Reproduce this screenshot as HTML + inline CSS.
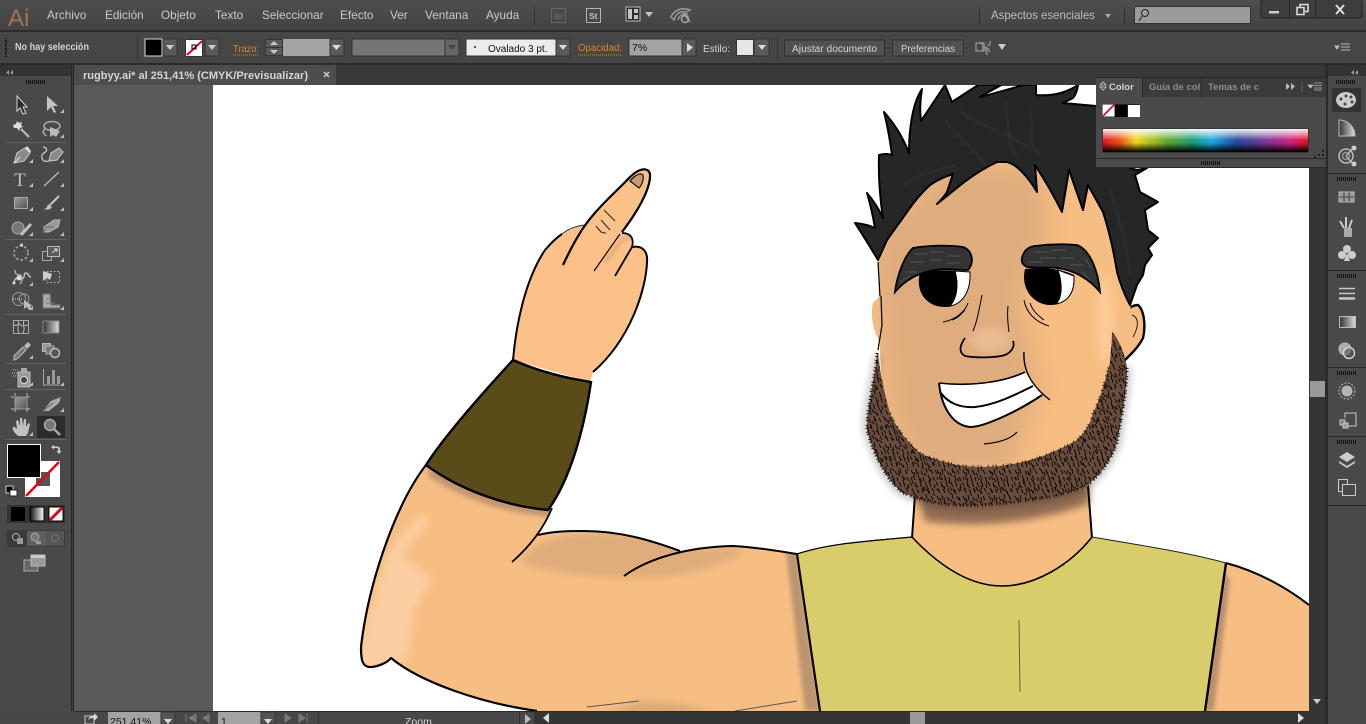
<!DOCTYPE html>
<html><head><meta charset="utf-8"><title>rugbyy.ai</title>
<style>
html,body{margin:0;padding:0;background:#444;overflow:hidden}
svg{display:block;position:absolute;left:0;top:0}
text{font-family:"Liberation Sans",sans-serif}
</style></head><body>
<svg width="1366" height="724" viewBox="0 0 1366 724" xmlns="http://www.w3.org/2000/svg">
<defs>
<filter id="b1" x="-30%" y="-30%" width="160%" height="160%"><feGaussianBlur stdDeviation="1"/></filter>
<filter id="b2" x="-30%" y="-30%" width="160%" height="160%"><feGaussianBlur stdDeviation="2"/></filter>
<filter id="b4" x="-40%" y="-40%" width="180%" height="180%"><feGaussianBlur stdDeviation="4"/></filter>
<filter id="b12" x="-50%" y="-50%" width="200%" height="200%"><feGaussianBlur stdDeviation="13"/></filter>
<linearGradient id="top" x1="0" y1="0" x2="0" y2="1"><stop offset="0" stop-color="#4e4e4e"/><stop offset="1" stop-color="#434343"/></linearGradient>
<linearGradient id="grayg" x1="0" y1="0" x2="1" y2="1"><stop offset="0" stop-color="#9a9a9a"/><stop offset="1" stop-color="#555"/></linearGradient>
<linearGradient id="grad2" x1="0" y1="0" x2="1" y2="0"><stop offset="0" stop-color="#333"/><stop offset="1" stop-color="#ddd"/></linearGradient>
<linearGradient id="grad3" x1="0" y1="0" x2="1" y2="0"><stop offset="0" stop-color="#111"/><stop offset="1" stop-color="#fff"/></linearGradient>
<linearGradient id="spec" x1="0" y1="0" x2="1" y2="0">
<stop offset="0" stop-color="#e5101a"/><stop offset=".08" stop-color="#e8501a"/><stop offset=".16" stop-color="#ecd81a"/><stop offset=".32" stop-color="#5aa52e"/><stop offset=".44" stop-color="#1a9a78"/><stop offset=".53" stop-color="#18a8de"/><stop offset=".65" stop-color="#27479c"/><stop offset=".78" stop-color="#6e3a95"/><stop offset=".92" stop-color="#d01f80"/><stop offset="1" stop-color="#e5101a"/></linearGradient>
<linearGradient id="specv" x1="0" y1="0" x2="0" y2="1"><stop offset="0" stop-color="#fff" stop-opacity=".95"/><stop offset=".5" stop-color="#fff" stop-opacity="0"/><stop offset=".6" stop-color="#000" stop-opacity="0"/><stop offset="1" stop-color="#000" stop-opacity="1"/></linearGradient>
<pattern id="hairs" width="26" height="26" patternUnits="userSpaceOnUse">
<path d="M1 2l2 4M6 1l1 5M11 3l2 4M16 0l1 5M21 2l2 4M3 8l2 4M8 7l2 5M13 9l1 4M18 7l2 5M23 9l2 4M0 14l2 4M5 14l1 5M10 15l2 4M15 14l2 5M20 15l1 4M2 20l2 5M7 21l2 4M12 20l1 5M17 21l2 4M22 20l2 4M4 4l1 4M9 11l2 4M14 5l2 3M19 12l1 4M24 16l1 4M6 17l2 3M14 19l2 4M19 23l1 3M1 9l1 3" stroke="#0d0b0a" stroke-width="1" fill="none"/>
</pattern>
<pattern id="hairs2" width="37" height="31" patternUnits="userSpaceOnUse">
<path d="M3 3l3 3M10 5l2 4M19 2l1 4M28 6l3 3M34 1l1 4M6 13l-1 4M15 12l3 3M24 15l1 4M32 13l2 4M2 22l2 3M11 24l3 2M20 21l-1 4M29 24l2 4M35 22l1 4M8 28l2 3M25 28l3 2" stroke="#120e0c" stroke-width="1" fill="none"/>
</pattern>
<clipPath id="cv"><rect x="213" y="85" width="1096" height="626"/></clipPath>
<clipPath id="facec"><path d="M878 262L887 240 907 212 930 185 960 165 1000 158 1040 165 1105 190 1135 280 1130 310 1120 365 1112 440 1040 490 950 490 885 440 880 350Z"/></clipPath>
<clipPath id="armc"><path d="M426 465C395 505 368 585 361 647C361 660 362 668 372 667C380 666 388 662 391 658C420 682 480 703 537 711L820 711 797 554C778 551 755 547 733 546L700 547 680 551C650 540 620 531 583 531C570 531 555 531 538 535L552 508Z"/></clipPath>
<clipPath id="rarmc"><path d="M1226 563C1260 572 1290 590 1309 605L1309 711 1205 711Z"/></clipPath>
</defs>

<!-- base -->
<rect width="1366" height="724" fill="#484848"/>
<rect x="74" y="85" width="139" height="626" fill="#5a5a5a"/>
<rect x="213" y="85" width="1096" height="626" fill="#fff"/>

<!-- ARTWORK -->
<g clip-path="url(#cv)">
<!-- neck -->
<path d="M915 480L912 540C945 572 975 586 1002 586C1035 586 1070 565 1092 540L1088 470Z" fill="#f7be83"/>
<path d="M915 490L1088 480 1090 503C1050 518 990 530 925 521Z" fill="#8a6650" filter="url(#b4)" opacity=".95"/>
<path d="M915 495L912 538M1088 486L1092 538" stroke="#000" stroke-width="2" fill="none"/>
<!-- shirt -->
<path d="M797 554C830 543 870 541 912 537C945 572 975 586 1002 586C1035 586 1070 565 1092 537C1140 545 1190 553 1226 563L1205 711 820 711Z" fill="#d9cc6b"/>
<path d="M912 537C945 572 975 586 1002 586C1035 586 1070 565 1092 537" stroke="#000" stroke-width="1.600" fill="none"/>
<path d="M797 554C830 543 870 541 912 537M1092 537C1140 545 1190 553 1226 563" stroke="#222" stroke-width="1" fill="none"/>
<path d="M1019 620L1020 692" stroke="#6b6130" stroke-width="1"/>
<!-- right arm -->
<path d="M1226 563C1260 572 1290 590 1309 605L1309 711 1205 711Z" fill="#f7be83"/>
<g clip-path="url(#rarmc)"><path d="M1222 570L1203 711 1214 711 1230 580Z" fill="#b98f6c" filter="url(#b2)"/></g>
<path d="M1226 563L1205 711" stroke="#000" stroke-width="2.400" fill="none"/>
<path d="M1226 563C1260 572 1290 590 1309 605" stroke="#000" stroke-width="2" fill="none"/>
<!-- arm -->
<path d="M426 465C395 505 368 585 361 647C361 660 362 668 372 667C380 666 388 662 391 658C420 682 480 703 537 711L820 711 797 554C778 551 755 547 733 546L700 547 680 551C650 540 620 531 583 531C570 531 555 531 538 535L552 508Z" fill="#f7be83"/>
<g clip-path="url(#armc)">
<path d="M355 670L370 610 388 552 420 515 430 520 402 556 432 578 415 610 407 660 390 672Z" fill="#fbcda0" filter="url(#b4)"/>
<path d="M520 562C540 535 570 533 600 533C650 535 680 548 700 548L745 548C735 565 680 578 640 578C590 578 545 572 520 562Z" fill="#dfac7c" filter="url(#b4)"/>
<path d="M426 468L430 478C465 500 510 515 552 517L552 505Z" fill="#bf9470" filter="url(#b2)" opacity=".95"/>
<path d="M786 552L797 552 820 711 805 711Z" fill="#bb9470" filter="url(#b2)"/>
<path d="M640 702C660 700 700 706 715 715L600 715Z" fill="#d8a878" filter="url(#b4)"/>
</g>
<path d="M426 465C395 505 368 585 361 647C361 660 362 668 372 667C380 666 388 662 391 658C420 682 480 703 537 711" stroke="#000" stroke-width="2.200" fill="none" stroke-linejoin="round"/>
<path d="M552 508C543 530 528 548 512 562" stroke="#000" stroke-width="1.800" fill="none"/>
<path d="M538 535C555 531 570 531 583 531C620 531 650 540 680 551" stroke="#000" stroke-width="2" fill="none"/>
<path d="M624 576C650 557 690 547 733 546C755 547 778 551 797 554" stroke="#000" stroke-width="2" fill="none"/>
<path d="M797 554L820 711" stroke="#000" stroke-width="2.200" fill="none"/>
<path d="M797 554C830 543 870 541 912 537" stroke="#000" stroke-width="1.200" fill="none"/>
<path d="M587 707L639 701M735 711L797 701" stroke="#555" stroke-width="1" fill="none"/>
<!-- hand -->
<path d="M513 360C516 325 525 280 545 250C555 238 568 228 585 225L630 177C638 169 648 166 650 174C651 190 635 215 622 232C632 233 634 240 632 247C643 245 648 252 647 262C646 290 630 340 593 372L590 382Z" fill="#fbc188"/>
<path d="M513 360C516 325 525 280 545 250C551 243 556 238 562 234" stroke="#000" stroke-width="2" fill="none"/>
<path d="M562 234C568 229 576 226 585 225" stroke="#333" stroke-width="1" fill="none"/>
<path d="M563 265C570 250 578 235 586 224C600 205 618 190 630 177C638 169 648 166 650 174C651 190 635 215 622 232" stroke="#000" stroke-width="2.200" fill="none"/>
<path d="M594 271L620 234" stroke="#000" stroke-width="1.200" fill="none"/>
<path d="M605 262L622 240 630 237" stroke="#d8a777" stroke-width="5" fill="none" opacity=".6" filter="url(#b1)"/>
<path d="M622 233C632 233 634 240 632 247L615 276" stroke="#000" stroke-width="1.800" fill="none"/>
<path d="M632 247C643 245 648 252 647 262C646 290 630 340 593 372" stroke="#000" stroke-width="2" fill="none"/>
<path d="M630 181C634 176 640 172 643 175C644 179 642 185 639 188Z" fill="#c89b72" stroke="#111" stroke-width="1.200"/>
<path d="M604 210L615 221M601 220L610 230M596 226L601 232C603 233 605 233 606 233" stroke="#222" stroke-width="1" fill="none"/>
<!-- band -->
<path d="M513 360C540 372 565 378 591 382C584 430 570 480 548 510C505 506 460 490 426 465C445 435 490 385 513 360Z" fill="#5a4c19" stroke="#000" stroke-width="2.400"/>

<!-- ears -->
<path d="M1115 318L1130 307 1140 305C1145 312 1145 328 1140 342L1123 362 1112 350Z" fill="#f7be83"/>
<path d="M1118 317C1125 310 1132 305 1138 305C1144 310 1146 325 1143 338C1138 348 1130 355 1123 362" stroke="#000" stroke-width="2.400" fill="none"/>
<path d="M1133 337C1138 328 1140 318 1132 315" stroke="#222" stroke-width="1" fill="none"/>
<path d="M880 296L873 303C870 315 873 330 880 343Z" fill="#f3bb84"/>
<!-- face -->
<path d="M878 262L887 240 907 212 930 185 960 165 1000 158 1040 165 1105 190 1135 280 1130 310 1120 365 1112 440 1040 490 950 490 885 440 880 350Z" fill="#f7be83"/>
<g clip-path="url(#facec)">
<path d="M870 230L950 160 1040 170 1050 230 1020 300 1040 385 1010 475 920 475 890 420Z" fill="#dfac7e" filter="url(#b12)"/>
<ellipse cx="1105" cy="320" rx="9" ry="45" fill="#fbca96" filter="url(#b4)"/>
<ellipse cx="990" cy="340" rx="20" ry="12" fill="#eabb8f" filter="url(#b4)"/>
</g>
<path d="M881 296L882 325 878 350" stroke="#000" stroke-width="1.200" fill="none"/>
<path d="M878 262L880 296" stroke="#000" stroke-width="1.200" fill="none"/>

<!-- beard -->
<path d="M877 356C875 380 866 410 867 430C872 450 885 480 903 493C925 502 940 504 953 505C980 507 1010 503 1030 500C1055 497 1075 492 1090 483C1105 470 1113 455 1117 443C1123 410 1127 390 1127 367" stroke="#000" stroke-width="6" fill="none" opacity=".3" filter="url(#b4)"/>
<path d="M877 353C875 380 866 410 867 430C872 450 885 480 903 493C925 502 940 504 953 505C980 507 1010 503 1030 500C1055 497 1075 492 1090 483C1105 470 1113 455 1117 443C1123 410 1127 390 1127 367C1124 350 1116 335 1112 332C1112 345 1110 355 1110 363C1105 380 1100 400 1093 413C1090 425 1085 432 1077 440C1060 450 1040 458 1023 462C1005 466 995 467 983 467C972 467 965 466 957 465C945 462 930 458 920 453C905 440 895 425 890 413C885 395 880 375 878 353Z" fill="#6a4c3d"/>
<path d="M877 353C875 380 866 410 867 430C872 450 885 480 903 493C925 502 940 504 953 505C980 507 1010 503 1030 500C1055 497 1075 492 1090 483C1105 470 1113 455 1117 443C1123 410 1127 390 1127 367C1124 350 1116 335 1112 332C1112 345 1110 355 1110 363C1105 380 1100 400 1093 413C1090 425 1085 432 1077 440C1060 450 1040 458 1023 462C1005 466 995 467 983 467C972 467 965 466 957 465C945 462 930 458 920 453C905 440 895 425 890 413C885 395 880 375 878 353Z" fill="url(#hairs)"/>
<path d="M877 353C875 380 866 410 867 430C872 450 885 480 903 493C925 502 940 504 953 505C980 507 1010 503 1030 500C1055 497 1075 492 1090 483C1105 470 1113 455 1117 443C1123 410 1127 390 1127 367C1124 350 1116 335 1112 332C1112 345 1110 355 1110 363C1105 380 1100 400 1093 413C1090 425 1085 432 1077 440C1060 450 1040 458 1023 462C1005 466 995 467 983 467C972 467 965 466 957 465C945 462 930 458 920 453C905 440 895 425 890 413C885 395 880 375 878 353Z" fill="url(#hairs2)"/>
<path d="M877 353C875 380 866 410 867 430C872 450 885 480 903 493C925 502 940 504 953 505C980 507 1010 503 1030 500C1055 497 1075 492 1090 483C1105 470 1113 455 1117 443C1123 410 1127 390 1127 367" stroke="#1a1412" stroke-width="3" stroke-dasharray="1 2 1 3 1 1.500 1 4" fill="none"/>
<path d="M890 413C895 425 905 440 920 453C930 458 945 462 957 465C980 468 1005 466 1023 462C1040 458 1060 450 1077 440C1085 432 1090 425 1093 413C1100 400 1105 380 1110 363" stroke="#2a1f18" stroke-width="2.500" stroke-dasharray="1 4 1 2 1 6" fill="none"/>

<!-- hair -->
<path d="M878 260Q866 240 855 223Q866 224 875 228Q872 210 867 193Q877 205 883 218Q878 185 879 155Q886 153 892 155Q889 132 884 112Q900 130 909 153Q909 130 913 112Q916 98 922 89Q919 105 921 121L945 85 952 102 978 85 1000 85 980 97 1023 85 1036 85 1036 95Q1060 97 1078 85Q1077 93 1073 98L1063 103 1096 106 1130 168 1137 170 1147 168 1135 175 1140 192 1158 202 1145 210 1148 230 1158 238 1148 248 1152 255 1145 265 1143 275 1137 285 1130 305Q1122 290 1117 272Q1112 240 1103 212L1088 185 1083 210 1069 170 1062 212Q1050 188 1035 165L1037 192Q1030 180 1023 173Q1015 164 1007 162L997 162Q980 170 963 183L937 204Q943 198 947 192L953 174Q940 178 930 185Q918 196 907 212L887 240Z" fill="#262626" stroke="#000" stroke-width="2" stroke-linejoin="round"/>
<path d="M980 97L1002 85 1023 85Z" fill="#fff" stroke="#000" stroke-width="1.500"/>
<g stroke="#343434" stroke-width="2" fill="none" filter="url(#b1)" opacity=".8">
<path d="M905 185C920 170 945 170 955 165M945 120C960 140 975 150 985 165M1005 100C1010 125 1005 145 1020 160M1030 110C1035 130 1025 145 1040 155"/>
<path d="M1110 190C1120 220 1128 250 1130 275M960 110C980 130 1000 125 1030 150"/>
</g>
<!-- eyes -->
<path d="M920 272C915 290 925 307 945 307C960 307 970 295 970 272C955 270 935 270 920 272Z" fill="#000"/>
<path d="M955 271C959 285 957 298 950 306C962 304 971 292 970 272Z" fill="#fff" stroke="#000" stroke-width="1"/>
<path d="M1025 269C1020 290 1035 306 1052 305C1068 304 1075 290 1074 275C1060 268 1040 267 1025 269Z" fill="#000"/>
<path d="M1058 270C1063 285 1062 298 1056 304C1068 302 1075 292 1074 276Z" fill="#fff" stroke="#000" stroke-width="1"/>
<!-- eyebrows -->
<path d="M895 292C897 275 905 255 913 248C930 245 950 245 963 247C972 250 975 262 968 270C955 270 945 268 935 270C920 272 905 280 895 292Z" fill="#333" stroke="#000" stroke-width="1.800"/>
<path d="M1022 258C1024 250 1028 247 1035 246C1050 244 1065 244 1077 245C1090 250 1098 270 1100 292C1090 280 1075 270 1057 268C1045 267 1035 268 1027 267C1023 265 1021 262 1022 258Z" fill="#333" stroke="#000" stroke-width="1.800"/>
<path d="M915 254h12M930 252h14M948 256h12M910 262h14M930 260h12M946 263h14M905 272h12M900 282l10 -6M1035 252h14M1052 250h14M1040 258h16M1060 258h14M1030 262h12M1070 265h14M1082 272l8 8M1085 258l6 10" stroke="#555" stroke-width="1" fill="none"/>
<!-- wrinkles -->
<path d="M982 295C979 310 977 322 973 331M1008 306C1007 315 1008 325 1009 332M968 303C965 312 955 320 943 322M965 310C960 315 958 318 952 320M1024 300C1026 312 1035 322 1049 326M1030 303C1033 312 1040 317 1044 320" stroke="#000" stroke-width="1" fill="none"/>
<!-- nose -->
<path d="M965 338C960 345 958 352 965 356C975 358 995 358 1005 355C1012 352 1015 346 1013 341" stroke="#000" stroke-width="1.800" fill="none"/>
<!-- mouth -->
<path d="M939 383C965 386 1000 384 1025 372L1042 395C1020 408 990 428 968 427C950 425 940 405 939 383Z" fill="#fff"/>
<path d="M939 383C965 386 1000 384 1025 372" stroke="#000" stroke-width="1.600" fill="none"/>
<path d="M939 383C941 403 950 425 970 427C985 427 1020 410 1042 395" stroke="#000" stroke-width="2" fill="none"/>
<path d="M941 393C948 403 960 408 975 407C995 405 1015 395 1033 386" stroke="#000" stroke-width="2" fill="none"/>
<path d="M1024 352C1023 368 1030 385 1050 400" stroke="#000" stroke-width="1.400" fill="none"/>
<path d="M984 444C995 443 1010 440 1017 432" stroke="#000" stroke-width="1.200" fill="none"/>
</g>

<!-- TOP BARS -->
<rect width="1366" height="31" fill="url(#top)"/>
<rect y="30" width="1366" height="2" fill="#2c2c2c"/>
<rect y="32" width="1366" height="32" fill="#464646"/>
<rect y="63" width="1366" height="2" fill="#2b2b2b"/>
<rect y="65" width="1366" height="20" fill="#393939"/>
<text x="8" y="26" font-size="24" fill="#a47353">Ai</text>
<g font-size="11.800" fill="#c9c9c9">
<text x="47" y="19">Archivo</text><text x="105" y="19">Edición</text><text x="161" y="19">Objeto</text><text x="215" y="19">Texto</text><text x="262" y="19">Seleccionar</text><text x="340" y="19">Efecto</text><text x="390" y="19">Ver</text><text x="425" y="19">Ventana</text><text x="486" y="19">Ayuda</text>
<text x="991" y="19" fill="#bdbdbd" textLength="104" lengthAdjust="spacingAndGlyphs">Aspectos esenciales</text>
</g>
<rect x="534" y="7" width="1" height="18" fill="#2f2f2f"/>
<rect x="551.500" y="8.500" width="14" height="14" fill="none" stroke="#666"/>
<text x="554" y="19" font-size="8.500" fill="#666" font-weight="bold">Br</text>
<rect x="586.500" y="8.500" width="14" height="14" fill="none" stroke="#b5b5b5"/>
<text x="589" y="19" font-size="8.500" fill="#c5c5c5" font-weight="bold">St</text>
<rect x="626" y="7" width="14" height="14" fill="#2c2c2c" stroke="#b8b8b8"/>
<path d="M628 9h4v10h-4zM634 9h4v4h-4zM634 15h4v4h-4z" fill="#c4c4c4"/>
<path d="M645 12h8l-4 5z" fill="#c4c4c4"/>
<path d="M671 17C674 10 682 7 690 10L686 12C680 11 676 14 674 20ZM678 20C679 15 684 13 688 14M683 13L690 22" stroke="#999" stroke-width="1.500" fill="none"/>
<circle cx="685" cy="19" r="3.500" fill="none" stroke="#aaa" stroke-width="1.500"/>
<rect x="979" y="7" width="1" height="18" fill="#2f2f2f"/>
<rect x="1124" y="7" width="1" height="18" fill="#2f2f2f"/>
<path d="M1105 14h6l-3 4z" fill="#aaa"/>
<rect x="1134.500" y="6.500" width="116" height="17" fill="#9b9b9b" stroke="#333"/>
<circle cx="1145" cy="13" r="3.500" fill="none" stroke="#222"/><path d="M1142 16l-3 5" stroke="#222"/>
<!-- window buttons -->
<path d="M1261 0v15q0 3 3 3h95q3 0 3-3V0" fill="#3e3e3e" stroke="#222"/>
<path d="M1289.500 0v18M1315.500 0v18" stroke="#262626"/>
<rect x="1269" y="11" width="10" height="2.500" fill="#ccc"/>
<path d="M1297 7.500h7v7h-7zM1300 7V4.500h8v7h-3" fill="none" stroke="#ddd" stroke-width="1.600"/>
<path d="M1336 5l8 9M1344 5l-8 9" stroke="#ddd" stroke-width="2"/>

<!-- control bar -->
<path d="M6 38v20" stroke="#111" stroke-width="2" stroke-dasharray="1 1"/>
<text x="15" y="50" font-size="9.800" fill="#d5d5d5" font-weight="bold" textLength="74" lengthAdjust="spacingAndGlyphs">No hay selección</text>
<rect x="137" y="36" width="1" height="24" fill="#333"/>
<rect x="145" y="39" width="17" height="17" fill="#000" stroke="#ddd"/>
<rect x="163" y="39" width="14" height="17" fill="#5a5a5a" stroke="#333"/><path d="M166 45h8l-4 5z" fill="#ccc"/>
<rect x="185.500" y="39.500" width="17" height="17" fill="#fff" stroke="#333"/>
<path d="M187 55l15-14" stroke="#e8001c" stroke-width="2"/><rect x="192" y="45" width="4" height="4" fill="none" stroke="#000"/>
<rect x="205" y="39" width="14" height="17" fill="#5a5a5a" stroke="#333"/><path d="M208 45h8l-4 5z" fill="#ccc"/>
<text x="233" y="52" font-size="10" fill="#d8852b" textLength="26" lengthAdjust="spacingAndGlyphs">Trazo:</text>
<path d="M233 55h26" stroke="#d8852b" stroke-dasharray="1 1"/>
<rect x="265.500" y="39.500" width="17" height="16" fill="#5a5a5a" stroke="#333"/>
<path d="M270 45l4-4 4 4zM270 50l4 4 4-4z" fill="#ccc"/><path d="M266 47.500h16" stroke="#333"/>
<rect x="283" y="39" width="47" height="17" fill="#a3a3a3"/>
<rect x="330" y="39" width="14" height="17" fill="#5a5a5a" stroke="#333"/><path d="M332 45h9l-4.500 5z" fill="#ddd"/>
<rect x="352" y="39" width="93" height="17" fill="#757575" stroke="#333"/>
<rect x="445" y="39" width="14" height="17" fill="#666" stroke="#333"/><path d="M448 45h8l-4 5z" fill="#444"/>
<rect x="466" y="39" width="90" height="17" fill="#ececec" stroke="#333"/>
<circle cx="475" cy="47" r="1" fill="#222"/>
<text x="488" y="52" font-size="10" fill="#111">Ovalado 3 pt.</text>
<rect x="556" y="39" width="14" height="17" fill="#5a5a5a" stroke="#333"/><path d="M559 45h8l-4 5z" fill="#ddd"/>
<text x="578" y="51" font-size="10" fill="#d8852b" textLength="44" lengthAdjust="spacingAndGlyphs">Opacidad:</text>
<path d="M578 55h44" stroke="#d8852b" stroke-dasharray="1 1"/>
<rect x="629" y="39" width="53" height="17" fill="#a3a3a3" stroke="#333"/>
<text x="632" y="51" font-size="10.500" fill="#111">7%</text>
<rect x="682" y="39" width="14" height="17" fill="#5a5a5a" stroke="#333"/><path d="M687 43l6 4.500-6 4.500z" fill="#ddd"/>
<text x="703" y="52" font-size="10" fill="#d5d5d5" textLength="27" lengthAdjust="spacingAndGlyphs">Estilo:</text>
<rect x="736.500" y="39.500" width="17" height="16" fill="#e6e6e6" stroke="#333"/>
<rect x="754" y="39" width="15" height="17" fill="#5a5a5a" stroke="#333"/><path d="M758 45h8l-4 5z" fill="#ddd"/>
<rect x="777" y="36" width="1" height="24" fill="#333"/>
<rect x="784.500" y="40" width="100" height="16" fill="#505050" stroke="#2e2e2e"/>
<text x="792" y="52" font-size="10" fill="#d5d5d5" textLength="85" lengthAdjust="spacingAndGlyphs">Ajustar documento</text>
<rect x="892.500" y="40" width="71" height="16" fill="#505050" stroke="#2e2e2e"/>
<text x="901" y="52" font-size="10" fill="#d5d5d5" textLength="54" lengthAdjust="spacingAndGlyphs">Preferencias</text>
<path d="M976 43h8v8h-8zM980 42l10 10M990 41v4h-3" fill="none" stroke="#aaa"/>
<path d="M982 44l8 5-3 1 1 5-2 0-1-5-3 2z" fill="#888"/>
<path d="M998 44h8l-4 6z" fill="#ccc"/>
<path d="M1335 46h4l-2 3zM1341 44h9M1341 47h9M1341 50h9" stroke="#bbb" fill="#bbb"/>

<!-- tab row -->
<rect x="0" y="65" width="72" height="11" fill="#333"/>
<path d="M9 70l-3 2.500 3 2.500zM13 70l-3 2.500 3 2.500z" fill="#999"/>
<rect x="74" y="65" width="262" height="20" fill="#4d4d4d"/>
<rect x="72" y="65" width="2" height="20" fill="#262626"/>
<text x="83" y="79" font-size="11" fill="#d5d5d5" font-weight="bold" textLength="225" lengthAdjust="spacingAndGlyphs">rugbyy.ai* al 251,41% (CMYK/Previsualizar)</text>
<path d="M324 72l5 5M329 72l-5 5" stroke="#ccc" stroke-width="1.500"/>

<!-- left toolbar -->
<rect x="0" y="76" width="72" height="635" fill="#494949"/>
<rect x="71" y="65" width="3" height="659" fill="#262626"/>
<rect x="72" y="65" width="1" height="659" fill="#3d3d3d"/>
<path d="M26 82h19" stroke="#111" stroke-width="4" stroke-dasharray="1 1"/>
<g fill="#646464">
<rect x="6" y="142" width="60" height="1"/><rect x="6" y="239" width="60" height="1"/><rect x="6" y="314" width="60" height="1"/><rect x="6" y="363" width="60" height="1"/><rect x="6" y="389" width="60" height="1"/><rect x="6" y="439" width="60" height="1"/>
</g>
<rect x="37" y="416" width="28" height="22" fill="#2c2c2c"/>
<!-- corner triangles -->
<path d="M60 113h4v-4zM60 138h4v-4zM29 163h4v-4zM60 163h4v-4zM29 187h4v-4zM60 187h4v-4zM29 211h4v-4zM60 211h4v-4zM29 236h4v-4zM60 236h4v-4zM29 262h4v-4zM60 262h4v-4zM29 286h4v-4zM29 310h4v-4zM60 310h4v-4zM29 359h4v-4zM29 386h4v-4zM60 386h4v-4zM60 412h4v-4zM29 436h4v-4z" fill="#bbb"/>
<!-- icons -->
<path d="M17 96v15l3-3 3 6 3-1-3-6h4z" fill="#2a2a2a" stroke="#d6d6d6"/>
<path d="M47 96v15l4-4 3 6 2-1-3-6h5z" fill="#c4c4c4"/>
<path d="M13 125l3-1 1-3 2 2 3-1-1 3 2 2-3 1-1 3-2-3-3 0z" fill="#ddd"/><path d="M21 129l8 8" stroke="#bbb" stroke-width="2"/>
<ellipse cx="52" cy="126" rx="8" ry="4.500" fill="none" stroke="#aaa" stroke-width="1.500"/><path d="M45 128l-2 4 3 4" stroke="#aaa" fill="none" stroke-width="1.500"/><path d="M50 127v10l3-2 3 2 4-6z" fill="#bbb"/>
<path d="M14 163l3-10 8-5 5 5-6 8z" fill="#8a8a8a" stroke="#c8c8c8"/><path d="M25 148l2-2 4 5-1 2z" fill="#ddd"/><path d="M14 163l6-6" stroke="#ddd"/>
<path d="M49 161l2-8 8-5 4 4-6 8z" fill="#8a8a8a" stroke="#c8c8c8"/><path d="M49 161c-8 2-9-6-5-8s3-6-1-6" fill="none" stroke="#c8c8c8" stroke-width="1.300"/>
<text x="14" y="186" font-size="19" fill="#c0c0c0" style="font-family:'Liberation Serif',serif">T</text>
<path d="M44 186l15-14" stroke="#c0c0c0" stroke-width="1.200"/>
<rect x="14.500" y="197.500" width="13" height="11" fill="url(#grayg)" stroke="#aaa"/>
<path d="M59 196l-9 9" stroke="#c4c4c4" stroke-width="2"/><path d="M43 209c3 0 4-1 5-5l4 3c-2 3-5 3-9 2z" fill="#c4c4c4"/>
<circle cx="18" cy="228" r="6" fill="#777" stroke="#aaa"/><path d="M21 235l10-11" stroke="#c0c0c0" stroke-width="3"/>
<path d="M44 227l10-7h6l-2 7-9 5h-5z" fill="#999" stroke="#bbb"/><path d="M44 232l2-5h8" stroke="#666" fill="none"/>
<circle cx="21" cy="253" r="7" fill="none" stroke="#aaa" stroke-width="1.500" stroke-dasharray="2.500 2"/><path d="M19 245l4-2v4z" fill="#ccc"/>
<rect x="42.500" y="251.500" width="9" height="9" fill="none" stroke="#aaa"/><rect x="47.500" y="246.500" width="12" height="10" fill="#5a5a5a" stroke="#bbb"/><path d="M52 253l5-4M54 249h3v3" stroke="#ddd" fill="none"/>
<path d="M14 282c2-7 5-2 8-3 4-2 1-6 4-6s2 4 5 4" fill="none" stroke="#bbb" stroke-width="1.500"/><path d="M15 270c0 5 3 5 5 5s3 6 0 9" fill="none" stroke="#aaa" stroke-width="1.500"/><circle cx="19" cy="278" r="2.500" fill="#ddd"/><circle cx="14" cy="283" r="1.500" fill="#ddd"/>
<rect x="46.500" y="271.500" width="13" height="11" fill="none" stroke="#aaa" stroke-dasharray="2 1.500"/><path d="M43 271v10l4-3 3 2 2-6z" fill="#ccc"/>
<circle cx="19" cy="299" r="6.500" fill="none" stroke="#999"/><circle cx="24" cy="299" r="5" fill="none" stroke="#999"/><path d="M13 299h10" stroke="#ddd" stroke-dasharray="1 1"/><path d="M24 300v9l3-2 2 3 3-1-2-3h3z" fill="#bbb"/>
<path d="M43 294v14h17v-3H51l-1-11zM46 299h5M46 303h9" fill="#aaa" stroke="#777"/>
<rect x="13.500" y="320.500" width="15" height="13" fill="#444" stroke="#aaa"/><path d="M14 325c4 2 5-3 7 0s4-2 7 1M18 321c2 4-2 7 1 12M24 321c-2 4 2 6-1 12" stroke="#bbb" fill="none"/>
<rect x="43" y="321" width="16" height="12" fill="url(#grad2)" stroke="#888"/>
<path d="M14 360l3-1 9-9-3-3-9 9z" fill="#777" stroke="#bbb"/><path d="M24 346l4-4 3 3-4 4z" fill="#bbb"/>
<rect x="42.500" y="343.500" width="8" height="8" fill="#999" stroke="#bbb"/><rect x="46" y="346" width="8" height="8" fill="#777" stroke="#aaa"/><circle cx="55" cy="353" r="4.500" fill="#555" stroke="#bbb" stroke-width="1.500"/>
<path d="M13 370h6M12 373h7M13 376h5" stroke="#bbb" stroke-dasharray="1 1"/><rect x="18" y="372" width="12" height="15" fill="#999" stroke="#bbb"/><circle cx="24" cy="380" r="3.500" fill="#444" stroke="#ddd"/><rect x="21" y="368" width="6" height="4" fill="#aaa"/>
<path d="M43.500 369v16h16" stroke="#aaa" fill="none"/><rect x="47" y="376" width="3" height="8" fill="#999"/><rect x="52" y="370" width="3" height="14" fill="#999"/><rect x="57" y="376" width="3" height="8" fill="#999"/>
<rect x="15" y="397" width="12" height="12" fill="url(#grayg)" stroke="#999"/><path d="M11 397h20M11 409h20M15 393v20M27 393v20" stroke="#bbb" stroke-dasharray="3 12 4 1"/>
<path d="M43 411l8-10 10-4-2 6-10 8z" fill="#aaa"/><path d="M44 410l9-7" stroke="#666"/>
<path d="M16 434c-3-3-4-6-3-7s3 1 4 2l-1-8 2-1 2 6 0-8h2l1 8 1-7 2 0v8l2-4 2 1-2 9-2 3h-8z" fill="#c0c0c0"/>
<circle cx="50" cy="425" r="5.500" fill="#777" stroke="#aaa" stroke-width="1.500"/><path d="M54 429l6 6" stroke="#aaa" stroke-width="2.500"/>
<!-- fill/stroke -->
<rect x="25" y="461" width="35" height="36" fill="#fff"/>
<rect x="36" y="472" width="14" height="14" fill="#555"/>
<path d="M26 496l33-34" stroke="#e8001c" stroke-width="2.400"/>
<rect x="7.500" y="444.500" width="33" height="33" fill="#000" stroke="#fff" stroke-width="1"/>
<path d="M51 447l3-2v1.500h3c2 0 3 1 3 3v1.500h1.500l-2.500 3-2.500-3H58V449c0-.5-.5-1-1-1h-3v1.500z" fill="#ccc"/>
<rect x="6" y="486" width="7" height="7" fill="#000" stroke="#ccc"/><rect x="10" y="490" width="7" height="6" fill="#fff" stroke="#222"/>
<rect x="7" y="505" width="58" height="18" fill="#333"/>
<rect x="11" y="507" width="14" height="14" fill="#000"/>
<rect x="30" y="507" width="14" height="14" fill="url(#grad3)" stroke="#000"/>
<rect x="49" y="507" width="14" height="14" fill="#fff" stroke="#000"/><path d="M50 520l12-12" stroke="#e8001c" stroke-width="3"/>
<rect x="7" y="530" width="58" height="17" fill="#3a3a3a"/>
<rect x="27" y="531" width="19" height="15" fill="#5e5e5e"/><rect x="46" y="531" width="18" height="15" fill="#555"/>
<circle cx="16" cy="537" r="3.500" fill="none" stroke="#aaa"/><rect x="17" y="538" width="6" height="6" fill="#999"/>
<circle cx="35" cy="537" r="4" fill="#777" stroke="#aaa"/><rect x="36" y="541" width="5" height="3" fill="#999"/>
<circle cx="55" cy="538" r="3.500" fill="none" stroke="#777"/>
<rect x="24" y="560" width="14" height="11" fill="#666" stroke="#aaa"/><rect x="31" y="555" width="14" height="11" fill="#999" stroke="#bbb"/><rect x="31" y="555" width="14" height="3" fill="#ccc"/>

<!-- right scroll & dock -->
<rect x="1309" y="85" width="17" height="639" fill="#353535"/>
<rect x="1310" y="381" width="15" height="16" fill="#9a9a9a"/>
<rect x="1325" y="65" width="3" height="659" fill="#2a2a2a"/>
<rect x="1328" y="65" width="38" height="659" fill="#494949"/>
<rect x="1328" y="65" width="38" height="11" fill="#333"/>
<path d="M1354 70l-3 2.500 3 2.500zM1358 70l-3 2.500 3 2.500z" fill="#999"/>
<path d="M1336 82h19" stroke="#111" stroke-width="4" stroke-dasharray="1 1"/>
<path d="M1313 699h8l-4 5z" fill="#ccc"/>
<rect x="1332" y="88" width="29" height="24" rx="1" fill="#333"/>
<ellipse cx="1346" cy="100" rx="10" ry="8" fill="#ccc"/>
<circle cx="1341" cy="99" r="1.500" fill="#444"/><circle cx="1346" cy="96" r="1.500" fill="#444"/><circle cx="1351" cy="97" r="1.500" fill="#444"/><circle cx="1352" cy="102" r="1.500" fill="#444"/><circle cx="1345" cy="104" r="1.500" fill="#444"/>
<path d="M1339 120v16h16c0-9-7-16-16-16z" fill="url(#grad2)" stroke="#bbb"/>
<circle cx="1346" cy="156" r="7" fill="none" stroke="#bbb" stroke-width="1.500"/><circle cx="1346" cy="156" r="3.500" fill="none" stroke="#999" stroke-width="1.500"/>
<path d="M1346 156l8-9M1346 156l8 9" stroke="#ccc"/><circle cx="1354" cy="148" r="2.500" fill="#ccc"/><circle cx="1354" cy="164" r="2.500" fill="#ccc"/>
<g fill="#272727"><rect x="1328" y="173" width="38" height="1"/><rect x="1328" y="270" width="38" height="1"/><rect x="1328" y="367" width="38" height="1"/><rect x="1328" y="436" width="38" height="1"/><rect x="1328" y="505" width="38" height="1"/></g>
<g stroke="#111" stroke-width="4" stroke-dasharray="1 1"><path d="M1337 179h19M1337 276h19M1337 373h19M1337 442h19"/></g>
<rect x="1339" y="192" width="15" height="10" fill="#999" stroke="#bbb"/><path d="M1344 192v10M1349 192v10M1339 197h15" stroke="#444"/>
<rect x="1344" y="228" width="8" height="9" fill="#aaa"/><path d="M1346 228v-11M1349 228l3-8M1344 228l-4-7" stroke="#ccc" stroke-width="2"/>
<circle cx="1347" cy="249" r="4" fill="#ccc"/><circle cx="1342" cy="255" r="4" fill="#ccc"/><circle cx="1352" cy="255" r="4" fill="#ccc"/><path d="M1347 253l-3 8h6z" fill="#ccc"/>
<path d="M1339 288.500h16M1339 293.500h16" stroke="#c8c8c8" stroke-width="1.500"/><path d="M1339 298.500h16" stroke="#c8c8c8" stroke-width="2.500"/>
<rect x="1339.500" y="316.500" width="16" height="11" fill="url(#grad2)" stroke="#bbb"/>
<circle cx="1345" cy="349" r="6" fill="#aaa" stroke="#bbb"/><circle cx="1349" cy="353" r="5.500" fill="#555" fill-opacity=".6" stroke="#ddd" stroke-width="1.300"/>
<circle cx="1347" cy="391" r="8" fill="none" stroke="#bbb" stroke-dasharray="2 1.500"/><circle cx="1347" cy="391" r="5.500" fill="#b5b5b5"/>
<path d="M1345 418v-5h11v13h-8" fill="none" stroke="#ccc"/><rect x="1340" y="420" width="5" height="5" fill="#777" stroke="#ccc"/><rect x="1343" y="423" width="5" height="5" fill="#999" stroke="#ccc"/>
<path d="M1347 452l8 5-8 5-8-5z" fill="#ccc"/><path d="M1339 461l8 5 8-5v2l-8 5-8-5z" fill="#ccc"/>
<rect x="1338.500" y="479.500" width="9" height="12" fill="none" stroke="#ccc"/><rect x="1342.500" y="484.500" width="13" height="11" fill="#494949" stroke="#ccc"/>

<!-- color panel -->
<rect x="1096" y="77" width="230" height="90" fill="#4a4a4a"/>
<rect x="1096" y="77" width="230" height="20" fill="#3b3b3b"/>
<rect x="1096" y="78" width="46" height="19" fill="#4a4a4a"/>
<rect x="1096" y="77" width="230" height="1" fill="#252525"/>
<rect x="1142" y="78" width="1" height="20" fill="#2b2b2b"/>
<rect x="1201" y="78" width="1" height="19" fill="#2b2b2b"/>
<path d="M1100 85l3-3 3 3zM1100 87l3 3 3-3z" fill="none" stroke="#ccc" stroke-width=".8"/>
<text x="1109" y="90" font-size="9.500" fill="#d5d5d5" font-weight="bold">Color</text>
<text x="1149" y="90" font-size="9.500" fill="#8e8e8e" font-weight="bold">Guía de col</text>
<text x="1208" y="90" font-size="9.500" fill="#8e8e8e" font-weight="bold">Temas de c</text>
<path d="M1286 83l4 3.500-4 3.500zM1291 83l4 3.500-4 3.500z" fill="#bbb"/>
<path d="M1302 82v10" stroke="#666"/>
<path d="M1308 85h5l-2.500 3zM1314 83h8M1314 85.500h8M1314 88h8M1314 90h8" stroke="#bbb" fill="#bbb" stroke-width=".8"/>
<rect x="1102" y="104" width="38" height="13" fill="#222"/>
<rect x="1102.500" y="104.500" width="12" height="12" fill="#fff"/>
<path d="M1103 116l12-12" stroke="#e8001c" stroke-width="1.600"/>
<rect x="1115" y="105" width="12" height="12" fill="#000"/>
<rect x="1128" y="105" width="12" height="12" fill="#fff"/>
<rect x="1102.500" y="128.500" width="206" height="24" fill="#222"/>
<rect x="1103" y="129" width="205" height="23" fill="url(#spec)"/>
<rect x="1103" y="129" width="205" height="23" fill="url(#specv)"/>
<path d="M1322 150h2v2h-2zM1318 154h2v2h-2zM1322 154h2v2h-2zM1314 158h2v-2h-2z" fill="#222"/>
<rect x="1096" y="158" width="230" height="1" fill="#2a2a2a"/>
<path d="M1201 163h19" stroke="#111" stroke-width="4" stroke-dasharray="1 1"/>
<rect x="1096" y="167" width="230" height="1" fill="#2a2a2a"/>

<!-- status bar -->
<rect x="0" y="711" width="534" height="13" fill="#484848"/>
<rect x="74" y="711" width="1235" height="1" fill="#2a2a2a"/>
<rect x="534" y="712" width="775" height="12" fill="#353535"/>
<rect x="910" y="712" width="15" height="12" fill="#9a9a9a"/>
<path d="M85 716h9v8h-9z" fill="none" stroke="#ccc"/><path d="M88 720c1-3 3-4 6-4v-3l4 4-4 4v-3c-2 0-4 0-6 2z" fill="#ddd"/>
<rect x="108" y="712" width="53" height="12" fill="#a3a3a3"/>
<text x="110" y="725" font-size="10.500" fill="#111">251,41%</text>
<rect x="161" y="712" width="14" height="12" fill="#555" stroke="#333"/><path d="M164 719h8l-4 5z" fill="#ddd"/>
<path d="M186 714v8M196 714l-7 4 7 4zM209 714l-6 4 6 4z" fill="#777" stroke="#777"/>
<rect x="218" y="712" width="43" height="12" fill="#a3a3a3"/>
<text x="221" y="725" font-size="10.500" fill="#111">1</text>
<rect x="261" y="712" width="14" height="12" fill="#555" stroke="#333"/><path d="M264 719h8l-4 5z" fill="#ddd"/>
<path d="M285 714l6 4-6 4zM299 714l6 4-6 4zM307 714v8" fill="#777" stroke="#777"/>
<rect x="318" y="712" width="1" height="12" fill="#333"/>
<text x="405" y="725" font-size="10.500" fill="#d5d5d5">Zoom</text>
<rect x="519" y="712" width="1" height="12" fill="#333"/>
<path d="M525 714l6 5-6 5z" fill="#bbb"/>
<path d="M549 713l-6 5 6 5z" fill="#ddd"/>
<path d="M1298 713l6 5-6 5z" fill="#ddd"/>
</svg>
</body></html>
